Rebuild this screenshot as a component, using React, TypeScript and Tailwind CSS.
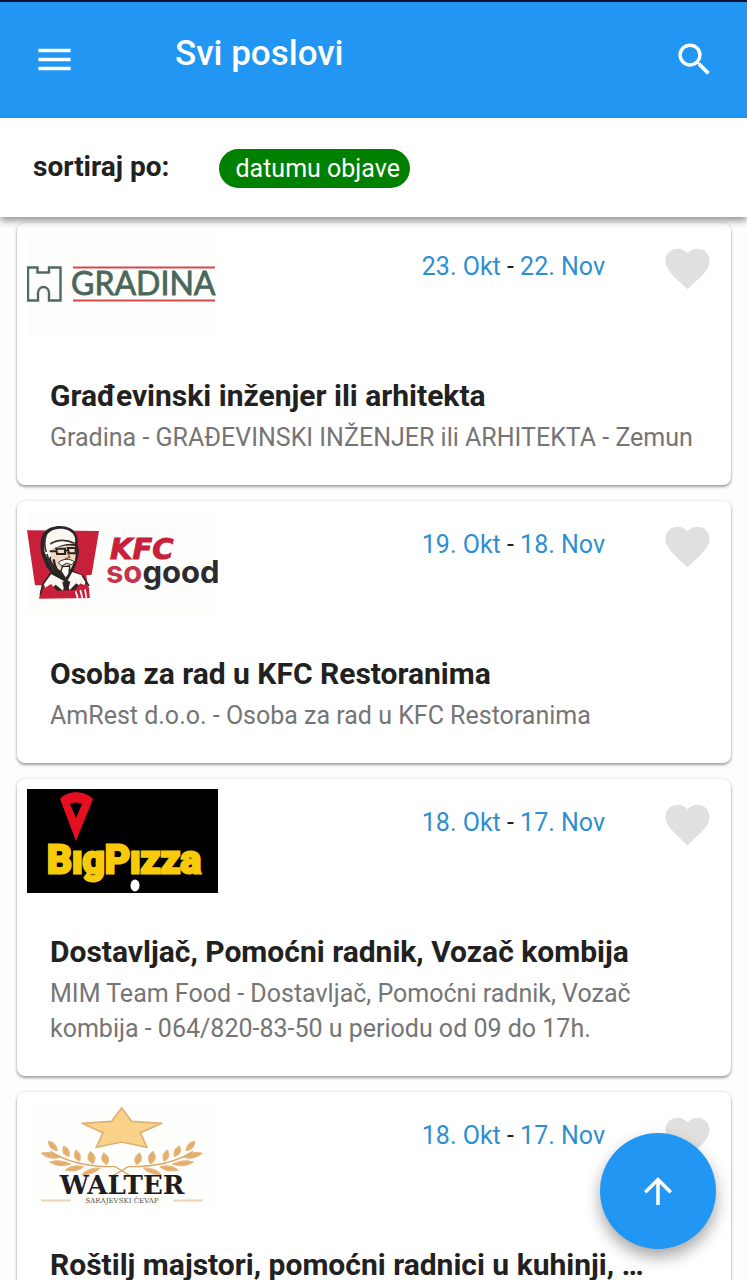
import React from 'react';
import { MdArrowUpward, MdFavorite, MdMenu, MdSearch } from 'react-icons/md';

interface Job {
  id: number;
  logo: React.ReactNode;
  from: string;
  to: string;
  title: string;
  description?: string;
}

const GradinaLogo = () => (
  <svg viewBox="0 0 191 104" className="w-full h-full" role="img" aria-label="Gradina">
    <rect width="191" height="104" fill="#fdfefc" />
    <path
      d="M1 34.500H10.500V39.500H22V34.500H33.500V67.500H22V60a5.500 6 0 0 0-11 0V67.500H1Z"
      fill="none"
      stroke="#4f6b60"
      strokeWidth="2.400"
    />
    <path d="M46 34.500H188M46 67.500H188" stroke="#d9474c" strokeWidth="1.800" />
    <text x="44" y="62" fontFamily="Lato" fontSize="32" fill="#4b675b" stroke="#4b675b" strokeWidth="0.800">
      GRADINA
    </text>
  </svg>
);

const KfcLogo = () => (
  <svg viewBox="0 0 191 104" className="w-full h-full" role="img" aria-label="KFC so good">
    <rect width="191" height="104" fill="#fdfefc" />
    <g transform="translate(-12 -11) scale(0.3333)">
      {/* Bucket */}
      <path d="M36 91 252 93 230 224 214 226 224 294 72 296 80 256 60 256Z" fill="#c8203a" />
      {/* Hair and head */}
      <path
        d="M82 170C74 148 74 112 88 96C102 78 140 72 164 84C184 94 190 112 188 134L192 152L186 184L176 212L204 226L216 250L190 270L152 276L108 270L88 250L108 218L94 200Z"
        fill="#2a2525"
      />
      <path d="M90 160C84 132 88 108 104 96C126 80 162 84 176 104C182 114 182 122 178 132C158 130 132 136 112 148L108 168L100 178Z" fill="#fdf8ef" />
      <path d="M108 150C130 138 158 134 180 138L184 152L180 180L168 206L140 214L120 202L108 180Z" fill="#f3d9c0" />
      {/* Hair shade */}
      <path d="M94 104C88 120 88 140 94 156M106 132C126 118 156 118 178 130M96 162L104 190L116 212" fill="none" stroke="#3a3232" strokeWidth="5" />
      {/* Glasses and nose */}
      <path d="M104 154H124M124 146H150V162H126ZM158 144H182V160H162ZM150 152L160 150" fill="none" stroke="#2a2525" strokeWidth="6" />
      <path d="M156 156L164 172L150 176" fill="none" stroke="#7b5a4a" strokeWidth="4" />
      {/* Moustache and goatee */}
      <path d="M130 188C142 176 166 174 178 186L170 194L154 190L140 198Z" fill="#fff" stroke="#2a2525" strokeWidth="3" />
      <path d="M142 200L164 198L162 222L152 236L138 214Z" fill="#fff" stroke="#2a2525" strokeWidth="4" />
      <path d="M116 178C118 200 128 218 146 238" fill="none" stroke="#2a2525" strokeWidth="7" />
      {/* Collar, bow tie, apron */}
      <path d="M108 222L86 250L96 278L122 254L144 272L152 246ZM172 216L154 248L164 270L184 250L204 266L212 246L200 226Z" fill="#fbf7f0" />
      <path d="M142 246L156 240L166 246L158 272H148Z" fill="#2a2525" />
      <path d="M74 294L86 266L108 252L126 272L180 270L196 250L222 262L224 294Z" fill="#c8203a" />
      <path d="M182 274L188 294M196 270L202 294M210 268L214 294" stroke="#fff" strokeWidth="5" />
      <path d="M108 218L84 252L76 284M202 226L222 258" fill="none" stroke="#2a2525" strokeWidth="5" />
    </g>
    <text x="83" y="48" fontFamily="DejaVu Sans" fontWeight="700" fontStyle="italic" fontSize="29" fill="#c8203a" stroke="#c8203a">
      KFC
    </text>
    <text x="79" y="72" fontFamily="Inter" fontWeight="700" fontSize="31" fill="#c8324a">
      so<tspan fill="#2b2b30">good</tspan>
    </text>
  </svg>
);

const BigPizzaLogo = () => (
  <svg viewBox="0 0 191 104" className="w-full h-full" role="img" aria-label="BigPizza">
    <rect width="191" height="104" fill="#000" />
    <text
      x="20"
      y="84"
      fontFamily="Roboto"
      fontWeight="700"
      fontSize="39"
      fill="#f7cb0a"
      stroke="#f7cb0a"
      strokeWidth="3"
    >
      BıgPızza
    </text>
    {/* Slice-shaped pin */}
    <path
      d="M33 10C40 1 58 1 66 10L49 52ZM43 15L49 29L55 15C51 13 47 13 43 15Z"
      fill="#e50f22"
      fillRule="evenodd"
    />
    <ellipse cx="108" cy="96.500" rx="4.500" ry="6" fill="#fff" />
  </svg>
);

// One half of the laurel wreath, the other half is mirrored
const Laurel = () => (
  <g fill="#e3ae6e" stroke="#e8bb82" strokeWidth="3">
    <path d="M78 250Q104 240 136 262Q104 272 78 250Z" />
    <path d="M104 276Q134 266 168 282Q134 296 104 276Z" />
    <path d="M150 300Q172 282 206 290Q184 310 150 300Z" />
    <path d="M200 314Q220 292 256 294Q234 316 200 314Z" />
    <path d="M100 214Q122 214 128 242Q102 242 100 214Z" />
    <path d="M146 228Q168 236 162 260Q136 254 146 228Z" />
    <path d="M182 240Q202 250 194 274Q170 266 182 240Z" />
    <path d="M226 244Q250 260 234 282Q208 268 226 244Z" />
    <path d="M266 248Q290 262 276 284Q250 272 266 248Z" />
    <path d="M106 244Q180 292 300 290L344 316" fill="none" stroke="#dca869" strokeWidth="4" />
  </g>
);

const WalterLogo = () => (
  <svg viewBox="0 0 191 104" className="w-full h-full" role="img" aria-label="Walter">
    <rect width="191" height="104" fill="#fefefd" />
    <g transform="translate(-12 -32) scale(0.3333)">
      <path
        d="M320 114L350 154L442 160L376 188L396 232L320 216L244 232L264 188L200 160L290 154Z"
        fill="#fbd28a"
        stroke="#ddb275"
        strokeWidth="5"
      />
      <Laurel />
      <g transform="translate(640 0) scale(-1 1)">
        <Laurel />
      </g>
    </g>
    <text x="95" y="92" textAnchor="middle" fontFamily="DejaVu Serif" fontWeight="700" fontSize="26" fill="#1d1c22">
      WALTER
    </text>
    <text x="95" y="101" textAnchor="middle" fontFamily="DejaVu Serif" fontSize="7" fill="#55504c">
      SARAJEVSKI ĆEVAP
    </text>
    <path d="M14 98.500H44M146 98.500H176" stroke="#e9d3b4" strokeWidth="2" />
  </svg>
);

const JOBS: Job[] = [
  {
    id: 1,
    logo: <GradinaLogo />,
    from: '23. Okt',
    to: '22. Nov',
    title: 'Građevinski inženjer ili arhitekta',
    description: 'Gradina - GRAĐEVINSKI INŽENJER ili ARHITEKTA - Zemun',
  },
  {
    id: 2,
    logo: <KfcLogo />,
    from: '19. Okt',
    to: '18. Nov',
    title: 'Osoba za rad u KFC Restoranima',
    description: 'AmRest d.o.o. - Osoba za rad u KFC Restoranima',
  },
  {
    id: 3,
    logo: <BigPizzaLogo />,
    from: '18. Okt',
    to: '17. Nov',
    title: 'Dostavljač, Pomoćni radnik, Vozač kombija',
    description: 'MIM Team Food - Dostavljač, Pomoćni radnik, Vozač kombija - 064/820-83-50 u periodu od 09 do 17h.',
  },
  {
    id: 4,
    logo: <WalterLogo />,
    from: '18. Okt',
    to: '17. Nov',
    title: 'Roštilj majstori, pomoćni radnici u kuhinji, …',
  },
];

const JobCard: React.FC<{ job: Job }> = ({ job }) => (
  <article className="shrink-0 rounded-lg bg-white pb-[30px] shadow-[0_2px_3px_rgba(0,0,0,0.35),0_0_3px_rgba(0,0,0,0.12)]">
    <div className="flex items-start pl-[10px] pr-[17px] pt-[10px]">
      <div className="w-[191px] h-[104px] shrink-0">{job.logo}</div>
      <p className="ml-auto mr-14 mt-4 text-[25px] leading-[35px] text-[#212121]">
        <span className="text-[#2e8fd0]">{job.from}</span> - <span className="text-[#2e8fd0]">{job.to}</span>
      </p>
      <button type="button" aria-label="Sačuvaj oglas" className="mt-[9px] text-[#e0e0e0]">
        <MdFavorite className="w-[53px] h-[53px]" />
      </button>
    </div>
    <div className="px-[33px] pt-9">
      <h2 className="truncate pb-px text-[30px] leading-[46px] font-bold text-[#212121]">{job.title}</h2>
      {job.description && <p className="text-[25px] leading-[35px] text-[#757575]">{job.description}</p>}
    </div>
  </article>
);

const App: React.FC = () => {
  return (
    <div className="flex h-screen flex-col overflow-hidden bg-[#fdfdfd] font-[Roboto,sans-serif]">
      <header className="flex h-[118px] shrink-0 items-center border-t-2 border-[#0b1533] bg-[#2196f3] pl-[33px] pr-[31px] pb-[2px] text-white">
        <button type="button" aria-label="Meni">
          <MdMenu className="w-[43px] h-[43px]" />
        </button>
        <h1 className="ml-[99px] pb-[10px] text-[35px] leading-[44px] font-medium">Svi poslovi</h1>
        <button type="button" aria-label="Pretraga" className="ml-auto">
          <MdSearch className="w-[43px] h-[43px]" />
        </button>
      </header>

      <div className="relative z-10 flex h-[99px] shrink-0 items-center bg-white pl-[33px] pt-[2px] shadow-[0_4px_7px_rgba(0,0,0,0.4)]">
        <span className="pb-1 text-[28px] leading-[35px] font-bold text-[#212121]">sortiraj po:</span>
        <button type="button" className="ml-[50px] rounded-full bg-[#008000] px-4 pr-[10px] text-[25px] leading-[39px] text-white">
          datumu objave
        </button>
      </div>

      <main className="flex min-h-0 flex-1 flex-col gap-4 overflow-y-auto pl-[17px] pr-4 pt-[6px] [scrollbar-width:none]">
        {JOBS.map((job) => (
          <JobCard key={job.id} job={job} />
        ))}
      </main>

      <button
        type="button"
        aria-label="Na vrh"
        className="fixed bottom-[31px] right-[31px] z-20 flex h-[116px] w-[116px] items-center justify-center rounded-full bg-[#2196f3] text-white shadow-[0_8px_16px_rgba(0,0,0,0.35)]"
      >
        <MdArrowUpward className="w-[42px] h-[42px]" />
      </button>
    </div>
  );
};

export default App;
